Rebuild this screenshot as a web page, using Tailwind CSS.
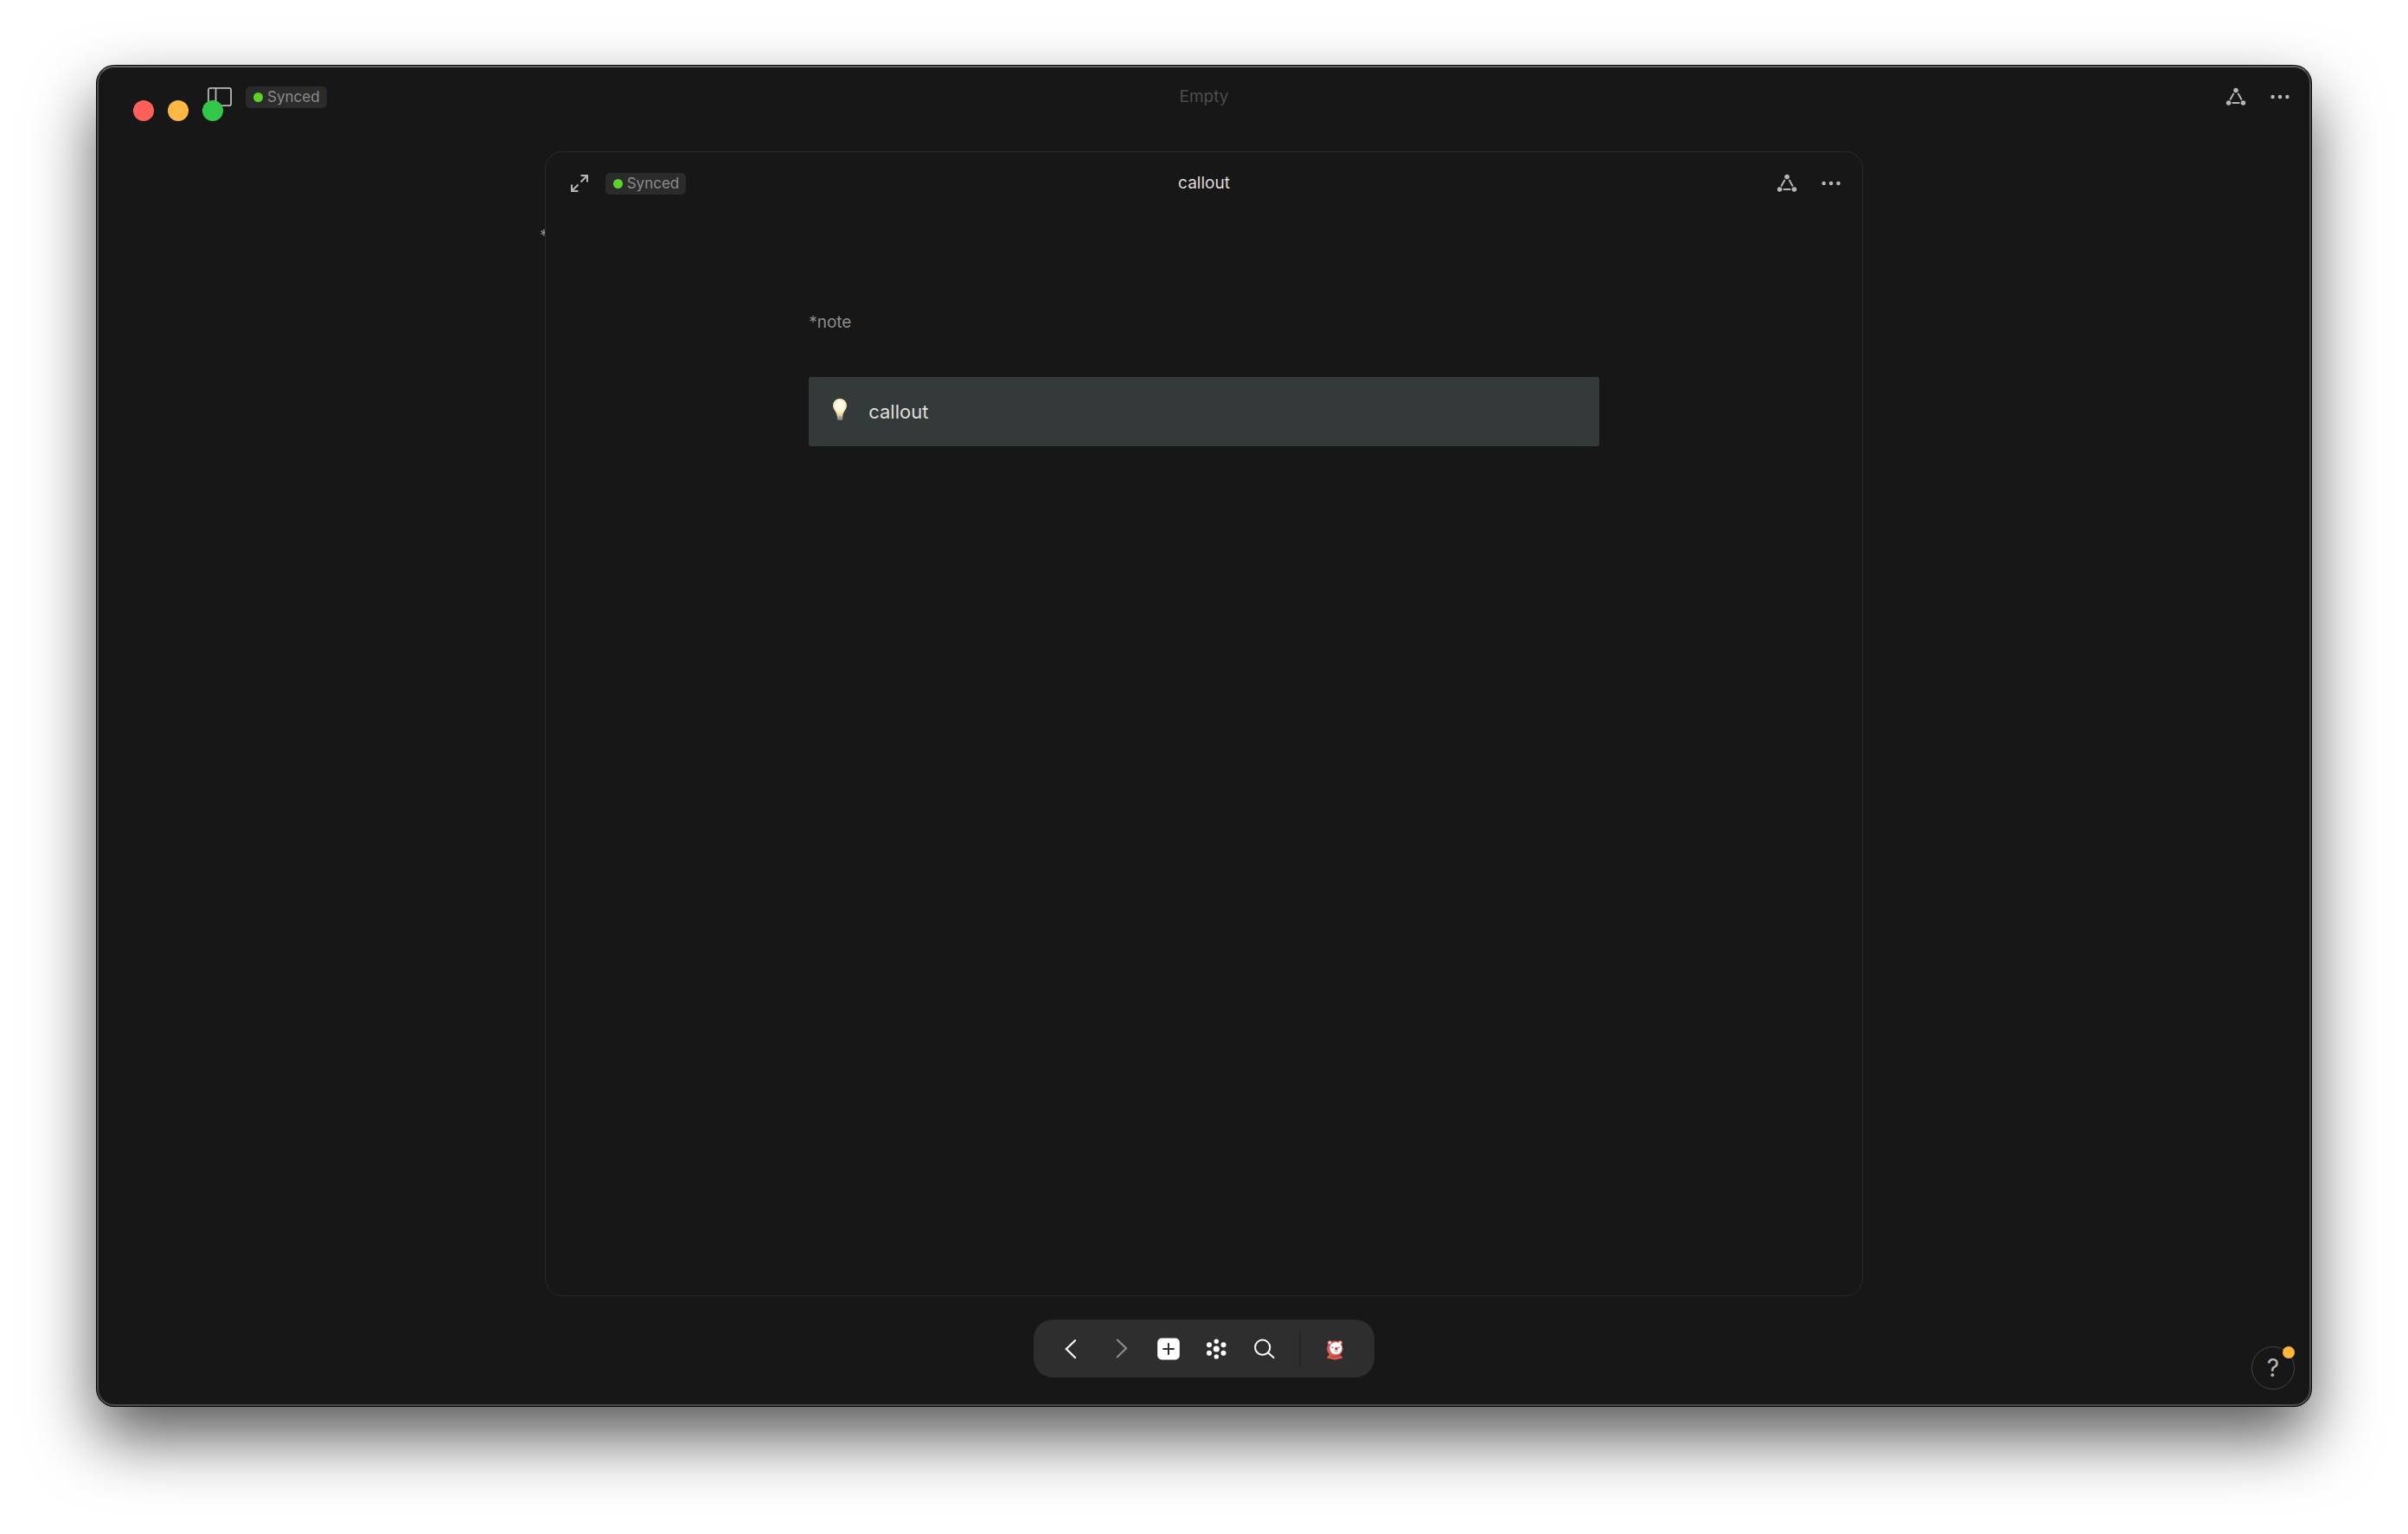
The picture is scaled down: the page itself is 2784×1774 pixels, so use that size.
<!DOCTYPE html>
<html lang="en">
<head>
<meta charset="utf-8">
<title>callout</title>
<script src="https://cdn.jsdelivr.net/npm/@tailwindcss/browser@4"></script>
</head>
<body class="flex min-h-screen flex-col bg-white px-28 pt-[76px] pb-[148px] font-['Inter',sans-serif]">

<svg class="hidden" aria-hidden="true">
  <symbol id="graph" viewBox="0 0 24 22">
    <g fill="#b6b6b6"><circle cx="12" cy="3.5" r="2.8"/><circle cx="3.6" cy="18" r="2.8"/><circle cx="20.4" cy="18" r="2.8"/></g>
    <path d="M9.2 7.600 5.700 13.800M14.800 7.600l3.500 6.200M8.400 18h7.200" stroke="#b6b6b6" stroke-width="2" stroke-linecap="round" fill="none"/>
  </symbol>
  <symbol id="dots" viewBox="0 0 22 6">
    <g fill="#b6b6b6"><circle cx="2.6" cy="3" r="2.3"/><circle cx="11" cy="3" r="2.3"/><circle cx="19.4" cy="3" r="2.3"/></g>
  </symbol>
</svg>

<div class="relative flex flex-1 flex-col rounded-[20px] border-2 border-[#4a4a4b] border-t-[#646464] bg-[#171717] shadow-[0_0_0_1px_#000,0_36px_76px_rgba(0,0,0,0.66)]">

  <header class="grid h-[68px] grid-cols-[1fr_auto_1fr] items-center px-[23px]">
    <div class="flex items-center gap-4 pl-[103px]">
      <button aria-label="Toggle sidebar">
        <svg class="block h-[22px] w-7" viewBox="0 0 28 22" fill="none" stroke="#b6b6b6" stroke-width="1.8"><rect x="0.9" y="0.9" width="26.2" height="20.2" rx="2.2"/><path d="M9.5 1v20"/></svg>
      </button>
      <div class="flex h-[25px] items-center gap-[5px] rounded-[5px] bg-[#2b2b2b] pr-2 pl-[9px] text-[17px] leading-[25px] text-[#8c8c8c]"><span class="size-[11px] rounded-full bg-[#5dd32a]"></span>Synced</div>
    </div>
    <h1 class="text-[19px] leading-7 text-[#4d4d4d]">Empty</h1>
    <div class="flex items-center justify-end gap-7">
      <button aria-label="Graph"><svg class="block h-[22px] w-6"><use href="#graph"/></svg></button>
      <button aria-label="More"><svg class="block h-1.5 w-[22px]"><use href="#dots"/></svg></button>
    </div>
  </header>

  <div class="absolute top-[38px] left-10 flex gap-4" role="group" aria-label="Window controls">
    <button class="size-6 rounded-full bg-[#ff5f5b]" aria-label="Close"></button>
    <button class="size-6 rounded-full bg-[#ffb942]" aria-label="Minimize"></button>
    <button class="size-6 rounded-full bg-[#34c84a]" aria-label="Zoom"></button>
  </div>

  <!-- page underneath the open dialog -->
  <div class="absolute inset-x-0 top-[181px] mx-auto w-[60.1%] text-[19px] leading-7 text-[#8c8c8c]">*note</div>

  <section class="relative mx-auto mt-[29px] flex w-[59.65%] flex-1 flex-col rounded-[20px] border border-[#292929] bg-[#171717]" role="dialog" aria-label="callout">
    <div class="grid h-[72px] grid-cols-[1fr_auto_1fr] items-center px-[25px]">
      <div class="flex items-center gap-5 pl-1">
        <button aria-label="Open as page">
          <svg class="block size-5" viewBox="0 0 20 20" fill="none" stroke="#b6b6b6" stroke-width="2"><path d="M11.5 8.5 18.5 1.5M11.5 1H19v7.5M8.5 11.5 1.5 18.5M1 11.5V19h7.5"/></svg>
        </button>
        <div class="flex h-[25px] items-center gap-[5px] rounded-[5px] bg-[#2b2b2b] pr-2 pl-[9px] text-[17px] leading-[25px] text-[#8c8c8c]"><span class="size-[11px] rounded-full bg-[#5dd32a]"></span>Synced</div>
      </div>
      <h2 class="text-[19px] leading-7 text-[#dfddd6]">callout</h2>
      <div class="flex items-center justify-end gap-7">
        <button aria-label="Graph"><svg class="block h-[22px] w-6"><use href="#graph"/></svg></button>
        <button aria-label="More"><svg class="block h-1.5 w-[22px]"><use href="#dots"/></svg></button>
      </div>
    </div>

    <div class="mx-auto w-3/5 pt-[111px]">
      <p class="text-[19px] leading-7 text-[#8c8c8c]">*note</p>
      <div class="mt-[49px] flex h-20 items-center gap-[25px] rounded-[3px] bg-[#343a3a] pl-7">
        <svg class="h-[30px] w-4" viewBox="0 0 16 30" role="img" aria-label="Light bulb">
          <defs>
            <radialGradient id="glass" cx="50%" cy="40%" r="58%"><stop offset="0" stop-color="#fffef6"/><stop offset=".6" stop-color="#fdf4d4"/><stop offset="1" stop-color="#eed083"/></radialGradient>
            <linearGradient id="base" x2="0" y2="1"><stop offset="0" stop-color="#c9c8c2"/><stop offset="1" stop-color="#777571"/></linearGradient>
          </defs>
          <path d="M4.9 19h6.4v4.2q0 1.6-1.6 1.8H6.5q-1.6-.2-1.6-1.8z" fill="url(#base)"/>
          <path d="M8 0a8 8 0 0 1 8 8c0 4.5-3.8 6.300-4.700 11.700H4.700C3.800 14.300 0 12.500 0 8a8 8 0 0 1 8-8z" fill="url(#glass)"/>
        </svg>
        <span class="text-[22px] leading-8 text-[#dfdfdc]">callout</span>
      </div>
    </div>
  </section>

  <nav class="mx-auto mt-[27px] mb-[31px] flex h-[67px] items-center rounded-[22px] bg-[#2e2e2e] pr-[18px] pl-4" aria-label="Toolbar">
    <button class="flex w-14 justify-center" aria-label="Back"><svg class="size-7" viewBox="0 0 28 28" fill="none" stroke="#fff" stroke-width="2.2" stroke-linecap="round"><path d="M18 4.2 7.8 14 18 24"/></svg></button>
    <button class="flex w-14 justify-center" aria-label="Forward"><svg class="size-7" viewBox="0 0 28 28" fill="none" stroke="#8b8b8b" stroke-width="2.2" stroke-linecap="round"><path d="M10.8 3.5 21 13.3 10.8 23.3"/></svg></button>
    <button class="flex w-14 justify-center" aria-label="New"><svg class="size-7" viewBox="0 0 28 28"><rect x="1.2" y="1.5" width="25.6" height="25" rx="5" fill="#fff"/><path d="M7.3 14h13.4M14 7.3v13.4" stroke="#2e2e2e" stroke-width="2"/></svg></button>
    <button class="flex w-14 justify-center" aria-label="Graph"><svg class="size-7" viewBox="0 0 28 28" fill="#fff"><circle cx="13.3" cy="14" r="3.6"/><circle cx="13.3" cy="5.2" r="2.7"/><circle cx="13.3" cy="22.9" r="2.7"/><circle cx="5" cy="9.2" r="3"/><circle cx="21.5" cy="9.2" r="3"/><circle cx="5" cy="18.8" r="3"/><circle cx="21.5" cy="18.8" r="3"/></svg></button>
    <button class="flex w-14 justify-center" aria-label="Search"><svg class="size-7" viewBox="0 0 28 28" fill="none" stroke="#fff" stroke-width="2" stroke-linecap="round"><circle cx="10.7" cy="12.2" r="8.6"/><path d="m17.2 18.4 6.3 5.7"/></svg></button>
    <span class="mx-[11px] h-10 w-0.5 bg-[#252525]"></span>
    <button class="flex w-14 justify-center" aria-label="Profile">
      <svg class="size-7" viewBox="0 0 28 28">
        <path d="M5 24.5q1-2.5 4-3h10.5q3 .5 4 3-1 .8-3 .5-6 2.8-12 0-2 .5-3.5-.5z" fill="#e05252"/>
        <circle cx="8.3" cy="6.8" r="2.5" fill="#e86a6a"/><circle cx="20.4" cy="6.8" r="2.5" fill="#e86a6a"/>
        <circle cx="14.3" cy="13.8" r="9.2" fill="#e35a5c"/>
        <circle cx="8.5" cy="6.8" r="1.4" fill="#fff"/><circle cx="20.2" cy="6.8" r="1.4" fill="#fff"/>
        <circle cx="15.4" cy="13.3" r="7" fill="#fff"/>
        <path d="M10.5 12.2h2.2M18 12.2h2.2" stroke="#665" stroke-width="1"/>
        <circle cx="16" cy="13.8" r="1.8" fill="#c8323c"/>
        <path d="M14 16.5q2 1.4 3.6 0" stroke="#a66" stroke-width=".8" fill="none"/>
        <path d="M7 21.5q7 3 14-.3" stroke="#a8492c" stroke-width="1.6" fill="none"/>
        <path d="m5.5 23.5 2.8-2.8 1.6 1.6z" fill="#b8902c"/>
      </svg>
    </button>
  </nav>

  <button class="absolute right-[17px] bottom-[17px] flex size-[50px] items-center justify-center rounded-full border border-[#444] text-[28px] leading-none text-[#b6b6b6]" aria-label="Help">?<span class="absolute -top-px -right-px size-3.5 rounded-full bg-[#ffb53a]"></span></button>
</div>
</body>
</html>
